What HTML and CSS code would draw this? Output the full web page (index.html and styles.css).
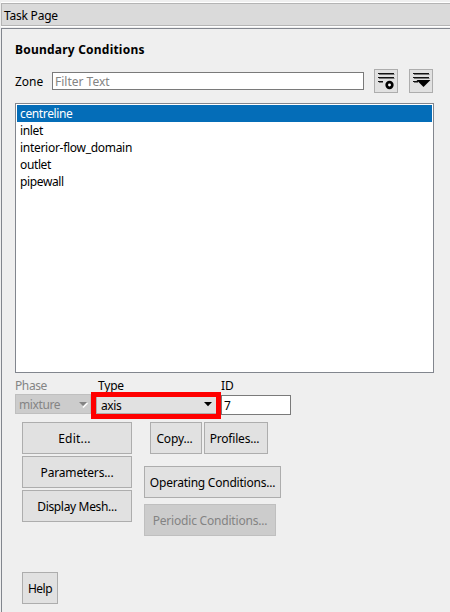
FILE: index.html
```html
<!DOCTYPE html>
<html lang="en">
<head>
<meta charset="utf-8">
<title>Task Page</title>
<link rel="stylesheet" href="styles.css">
</head>
<body>
<header class="titlebar"><span class="t-task">Task Page</span></header>
<main class="panel">
  <h1><span class="t-head">Boundary Conditions</span></h1>
  <div class="filter">
    <label><span class="t-zone">Zone</span></label>
    <div class="input filter-input"><span class="t-filter">Filter Text</span></div>
    <button class="tool" aria-label="Filter options">
      <svg width="22" height="22" viewBox="0 0 22 22"><path d="M3 3.500h16M3 7.500h16M3 11.500h5" stroke="#111"/><path d="M4 4.500h15.500M4 8.500h15.500M4 12.500h4" stroke="#777"/><circle cx="14.500" cy="15" r="2.800" fill="#fff" stroke="#000" stroke-width="2.700"/></svg>
    </button>
    <button class="tool" aria-label="List options">
      <svg width="22" height="22" viewBox="0 0 22 22"><path d="M3 3.500h16M3 7.500h16M3 11.500h5" stroke="#111"/><path d="M4 4.500h15.500M4 8.500h15.500M4 12.500h4" stroke="#777"/><path d="M6.500 10H20.500L13.500 17z" fill="#000"/></svg>
    </button>
  </div>
  <ul class="list">
    <li class="selected"><span class="t-centre">centreline</span></li>
    <li><span class="t-inlet">inlet</span></li>
    <li><span class="t-interior">interior-flow_domain</span></li>
    <li><span class="t-outlet">outlet</span></li>
    <li><span class="t-pipe">pipewall</span></li>
  </ul>
  <div class="fields">
    <div class="field phase"><label><span class="t-phase">Phase</span></label>
      <div class="combo disabled"><span class="t-mixture">mixture</span><svg width="9" height="6" viewBox="0 0 9 6"><path d="M4 5.500L8.500 1" stroke="#fff" stroke-width="1.500"/><path d="M0 0h8L4 4z" fill="#838383"/></svg></div></div>
    <div class="field type"><label><span class="t-type">Type</span></label>
      <div class="combo marked"><span class="t-axis">axis</span><svg width="8" height="5" viewBox="0 0 8 5"><path d="M0 0h8L4 4.300z"/></svg></div></div>
    <div class="field id"><label><span class="t-id">ID</span></label>
      <div class="input"><span class="t-seven">7</span></div></div>
  </div>
  <div class="actions">
    <div class="col left">
      <button><span class="t-edit">Edit...</span></button>
      <button><span class="t-param">Parameters...</span></button>
      <button><span class="t-display">Display Mesh...</span></button>
    </div>
    <div class="col right">
      <div class="pair"><button class="copy"><span class="t-copy">Copy...</span></button><button class="profiles"><span class="t-profiles">Profiles...</span></button></div>
      <button class="operating"><span class="t-operating">Operating Conditions...</span></button>
      <button class="periodic" disabled><span class="t-periodic">Periodic Conditions...</span></button>
    </div>
  </div>
  <button class="help"><span class="t-help">Help</span></button>
</main>
</body>
</html>
```
FILE: styles.css
```css
* { box-sizing: border-box; }
body { margin: 0; padding: 3px 0 0 1px; width: 450px; height: 612px; overflow: hidden; background: #efefef; color: #000; font: 12px/16px "Noto Sans", "Open Sans", sans-serif; }
span { display: inline-block; white-space: nowrap; }
.titlebar { height: 23px; border: 1px solid #b4b4b4; border-right: 0; background: #dadada; padding: 4px 2px; box-shadow: 0 -1px #fff, 0 1px #fff; }
.panel { margin-top: 2px; height: 590px; border: 1px solid #82868e; border-width: 1px 0 0 1px; padding: 12px 16px 0 13px; }
h1 { margin: 0; padding-top: 1px; font-size: 12px; line-height: 16px; height: 28px; }
.filter { display: flex; align-items: center; height: 24px; }
.filter label { width: 37px; padding-top: 2px; }
.input { border: 1px solid #7a7a7a; background: #fff; display: flex; align-items: center; padding-left: 2px; }
.filter-input { width: 312px; height: 18px; color: #848484; margin-right: 10px; padding-top: 2px; }
button { font: inherit; color: #000; height: 32px; padding: 2px 0 0; border: 1px solid #adadad; background: #e1e1e1; display: flex; align-items: center; justify-content: center; flex: none; }
.tool { width: 24px; height: 24px; padding: 0; margin-right: 11px; }
.tool:last-child { margin-right: 0; }
.tool svg { display: block; fill: none; }
.list { margin: 10px 0 0; padding: 1px; list-style: none; width: 419px; height: 270px; border: 1px solid #82868e; background: #fff; }
.list li { height: 17px; line-height: 17px; padding-left: 3px; letter-spacing: -.37px; }
.list .t-interior { letter-spacing: -.29px; }
.selected { background: #046db8; color: #fff; }
.fields { display: flex; height: 49px; padding-top: 5px; }
.field label { display: block; height: 16px; }
.phase { width: 76px; color: #848484; }
.type { width: 130px; }
.type label { padding-left: 7px; }
.id { width: 70px; }
.id .input { height: 20px; margin-top: 1px; padding-top: 1px; }
.combo { display: flex; align-items: center; justify-content: space-between; }
.disabled { height: 20px; background: #ccc; border: 1px solid #bfbfbf; padding: 1px 2px 0 3px; }
.marked { position: relative; height: 27px; margin-top: -2px; border: 5px solid #f00; background: #e1e1e1; box-shadow: inset 1px -1px #adadad; padding: 0 4px 0 5px; }
.marked svg { margin-bottom: 2px; }
.actions { display: flex; height: 150px; padding-left: 7px; }
.left { width: 110px; display: flex; flex-direction: column; gap: 2px; margin-right: 12px; }
.left button { width: 110px; }
.pair { display: flex; gap: 2px; padding-left: 6px; margin-bottom: 12px; }
.copy { width: 52px; padding-right: 3px; }
.profiles { width: 64px; padding-right: 3px; }
.operating { width: 137px; margin-bottom: 6px; }
.periodic { width: 132px; background: #ccc; border-color: #bfbfbf; color: #838383; }
.help { width: 36px; margin-left: 7px; }
.t-task { letter-spacing: -.22px; }
.t-head { letter-spacing: .22px; }
.t-phase, .t-axis, .t-mixture { letter-spacing: -.4px; }
.t-type { letter-spacing: -.2px; }
.t-edit { letter-spacing: .2px; margin-right: 5px; }
.t-param { letter-spacing: -.15px; }
.t-display { letter-spacing: -.33px; }
.t-profiles { letter-spacing: -.2px; }
.t-copy { letter-spacing: -.15px; }
.t-operating { letter-spacing: -.23px; }
.t-periodic { letter-spacing: -.2px; }
.t-help { letter-spacing: -.5px; }
```
